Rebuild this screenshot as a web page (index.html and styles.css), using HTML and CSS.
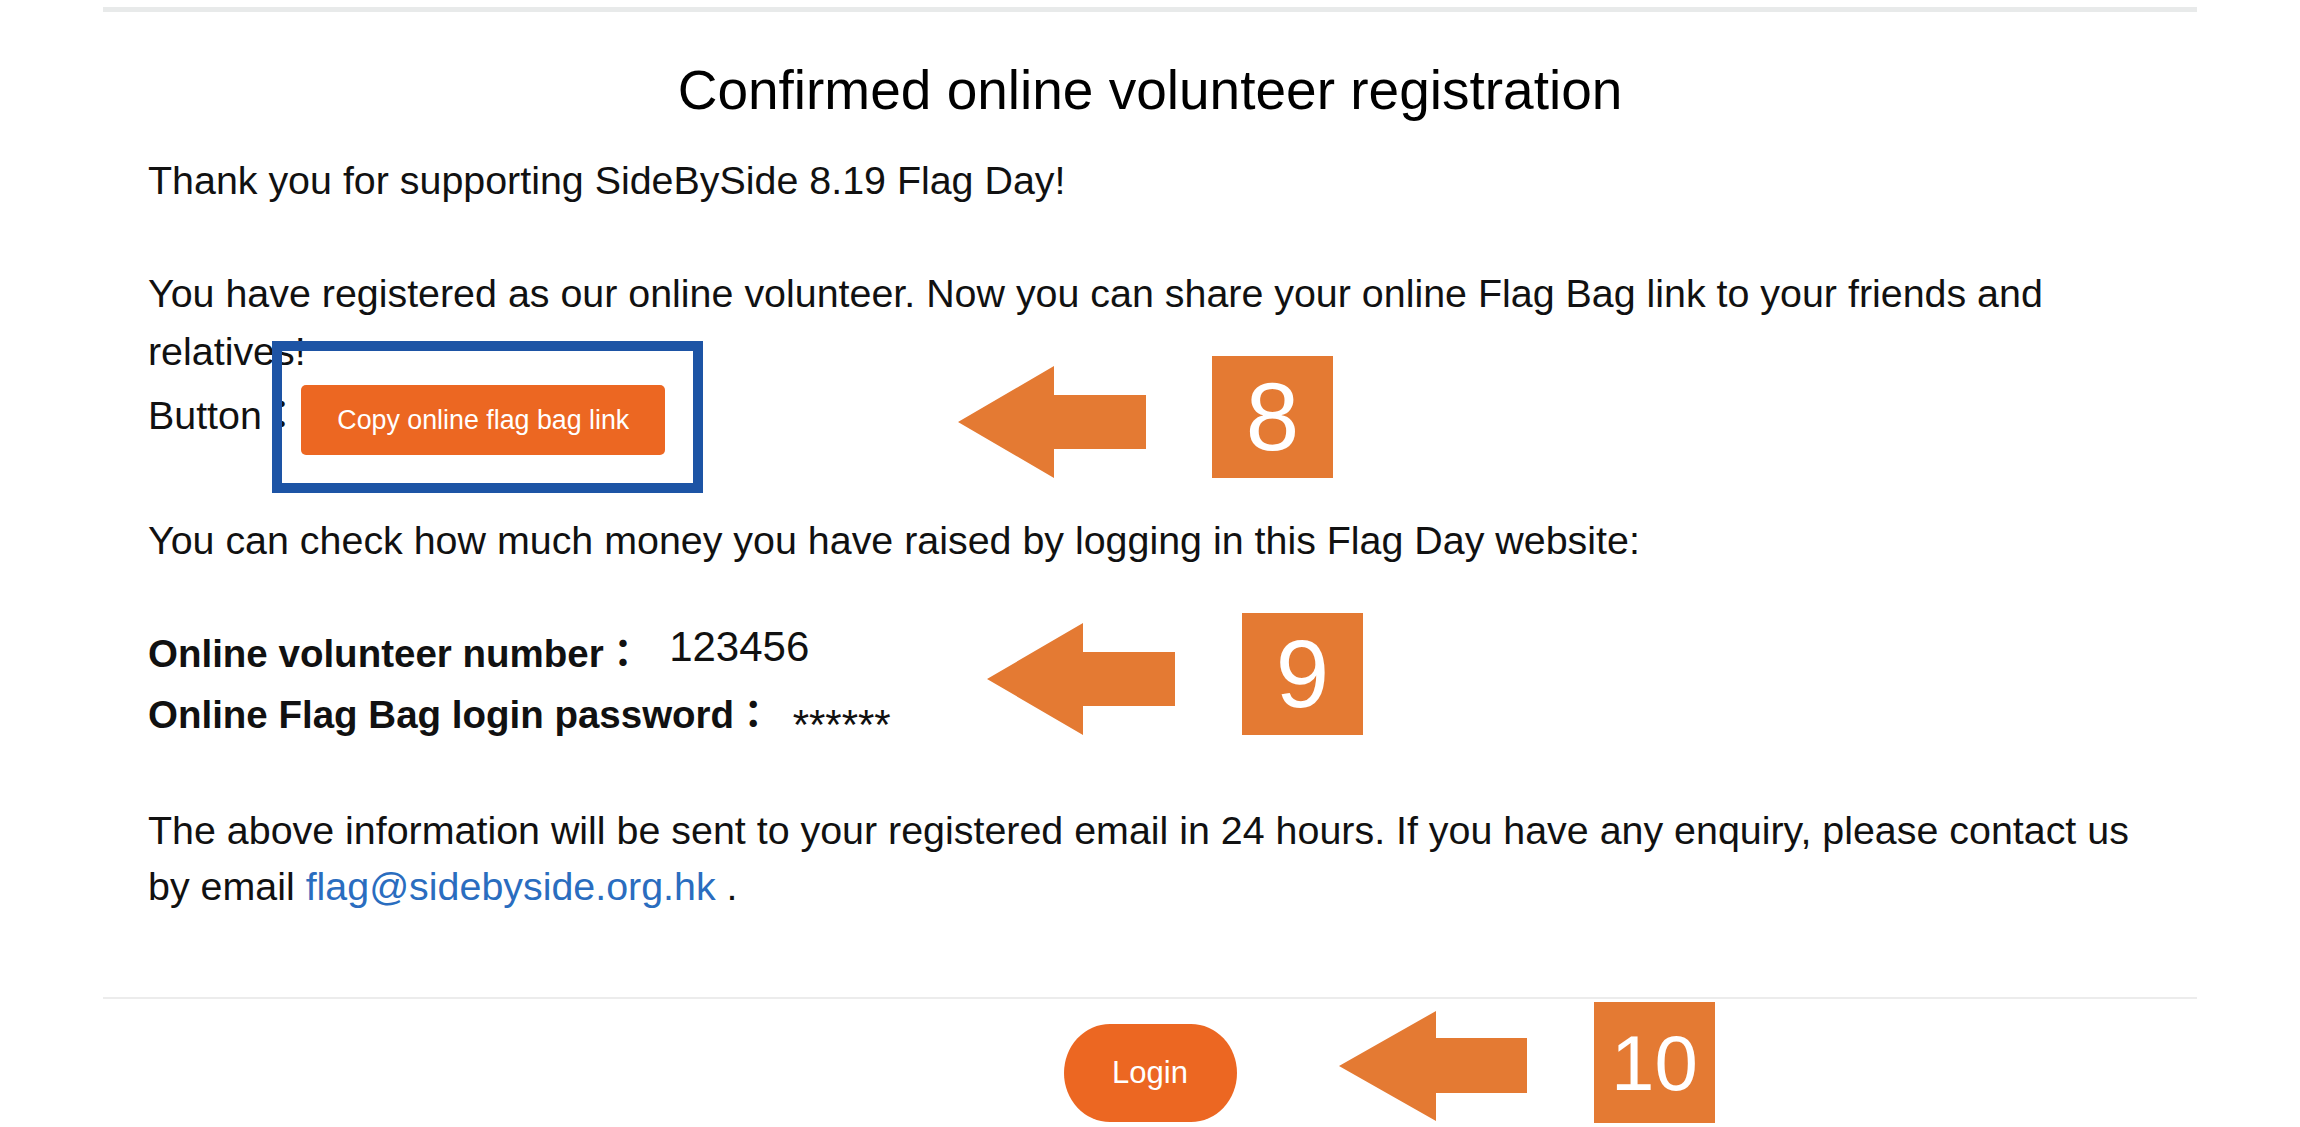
FILE: index.html
```html
<!DOCTYPE html>
<html lang="en">
<head>
<meta charset="utf-8">
<title>Confirmed online volunteer registration</title>
<link rel="stylesheet" href="styles.css">
</head>
<body>
<div class="page">
  <div class="panel">
    <h1 class="title">Confirmed online volunteer registration</h1>
    <div class="content">
      <p class="msg thanks">Thank you for supporting SideBySide 8.19 Flag Day!</p>
      <p class="msg share">You have registered as our online volunteer. Now you can share your online Flag Bag link to your friends and relatives!<br>Button：<span class="copy-wrap"><button class="copy-btn" type="button">Copy online flag bag link</button><span class="frame"></span></span></p>
      <p class="msg check">You can check how much money you have raised by logging in this Flag Day website:</p>
      <div class="creds">
        <div class="cred"><span class="label">Online volunteer number：</span><span class="value">123456</span></div>
        <div class="cred"><span class="label">Online Flag Bag login password：</span><span class="mask">******</span></div>
      </div>
      <p class="msg info">The above information will be sent to your registered email in 24 hours. If you have any enquiry, please contact us by email <a class="mail" href="#">flag@sidebyside.org.hk</a> .</p>
    </div>
    <div class="footer">
      <button class="login-btn" type="button">Login</button>
    </div>
  </div>

  <div class="note note-8">
    <svg class="arrow" width="188" height="112" viewBox="0 0 188 112"><polygon points="0,56 96,0 96,29 188,29 188,83 96,83 96,112"/></svg>
    <div class="num num-8">8</div>
  </div>
  <div class="note note-9">
    <svg class="arrow" width="188" height="112" viewBox="0 0 188 112"><polygon points="0,56 96,0 96,29 188,29 188,83 96,83 96,112"/></svg>
    <div class="num num-9">9</div>
  </div>
  <div class="note note-10">
    <svg class="arrow" width="188" height="112" viewBox="0 0 188 112"><polygon points="0,55 97,0 97,27 188,27 188,82 97,82 97,110"/></svg>
    <div class="num num-10">10</div>
  </div>
</div>
</body>
</html>
```
FILE: styles.css
```css
html, body {
  margin: 0;
  padding: 0;
  background: #ffffff;
}

body {
  font-family: "Liberation Sans", Arial, "Noto Sans CJK TC", sans-serif;
  color: #111111;
  padding-top: 7px;
  overflow: hidden;
}

.page {
  position: relative;
  width: 2300px;
  height: 1120px;
}

.panel {
  width: 2094px;
  margin: 0 auto;
  border-top: 5px solid #e8eaea;
}

.title {
  margin: 45px 0 0;
  font-size: 55px;
  line-height: 66px;
  font-weight: normal;
  text-align: center;
  color: #000000;
}

.content {
  padding: 0 45px;
  font-size: 39.4px;
  line-height: 58px;
}

.msg {
  margin: 0;
}

.thanks {
  margin-top: 28px;
}

.share {
  margin-top: 55px;
}

.copy-wrap {
  position: relative;
  display: inline-block;
  margin-top: 5px;
}

.copy-btn {
  display: inline-block;
  height: 70px;
  padding: 0 36px;
  border: none;
  border-radius: 5px;
  background: #ec6722;
  color: #ffffff;
  font-family: "Liberation Sans", Arial, sans-serif;
  font-size: 26.8px;
  line-height: 70px;
  vertical-align: baseline;
}

.frame {
  position: absolute;
  left: -29px;
  top: -44px;
  right: -38px;
  bottom: -38px;
  border: 10px solid #1d54a5;
}

.check {
  margin-top: 56px;
}

.creds {
  margin-top: 54px;
  line-height: 60px;
}

.label {
  font-weight: bold;
  font-size: 38.5px;
}

.value {
  font-size: 42px;
  line-height: 1;
  margin-left: 27px;
  vertical-align: 6px;
}

.mask {
  margin-left: 20px;
  font-size: 42px;
  line-height: 0;
  vertical-align: -11px;
}

.info {
  margin-top: 57px;
  line-height: 56px;
}

.mail {
  color: #2a6dbf;
  text-decoration: none;
}

.footer {
  margin-top: 83px;
  border-top: 2px solid #ececec;
  padding-top: 25px;
  display: flex;
  justify-content: center;
}

.login-btn {
  width: 173px;
  height: 98px;
  border: none;
  border-radius: 46px / 49px;
  background: #ec6722;
  color: #ffffff;
  font-family: "Liberation Sans", Arial, sans-serif;
  font-size: 31px;
  line-height: 98px;
  padding: 0;
}

/* annotation overlays */
.note {
  position: absolute;
  display: flex;
  align-items: flex-end;
}

.arrow {
  display: block;
}

.arrow polygon {
  fill: #e47a33;
}

.num {
  display: flex;
  align-items: center;
  justify-content: center;
  width: 121px;
  height: 122px;
  background: #e47a33;
  color: #ffffff;
  font-family: "Liberation Sans", Arial, sans-serif;
  font-size: 96px;
  line-height: 1;
}

.note-8 {
  left: 958px;
  top: 349px;
  gap: 66px;
}

.note-9 {
  left: 987px;
  top: 606px;
  gap: 67px;
}

.note-10 {
  left: 1339px;
  top: 995px;
  gap: 67px;
}

.num-10 {
  height: 121px;
  font-size: 78px;
}
```
